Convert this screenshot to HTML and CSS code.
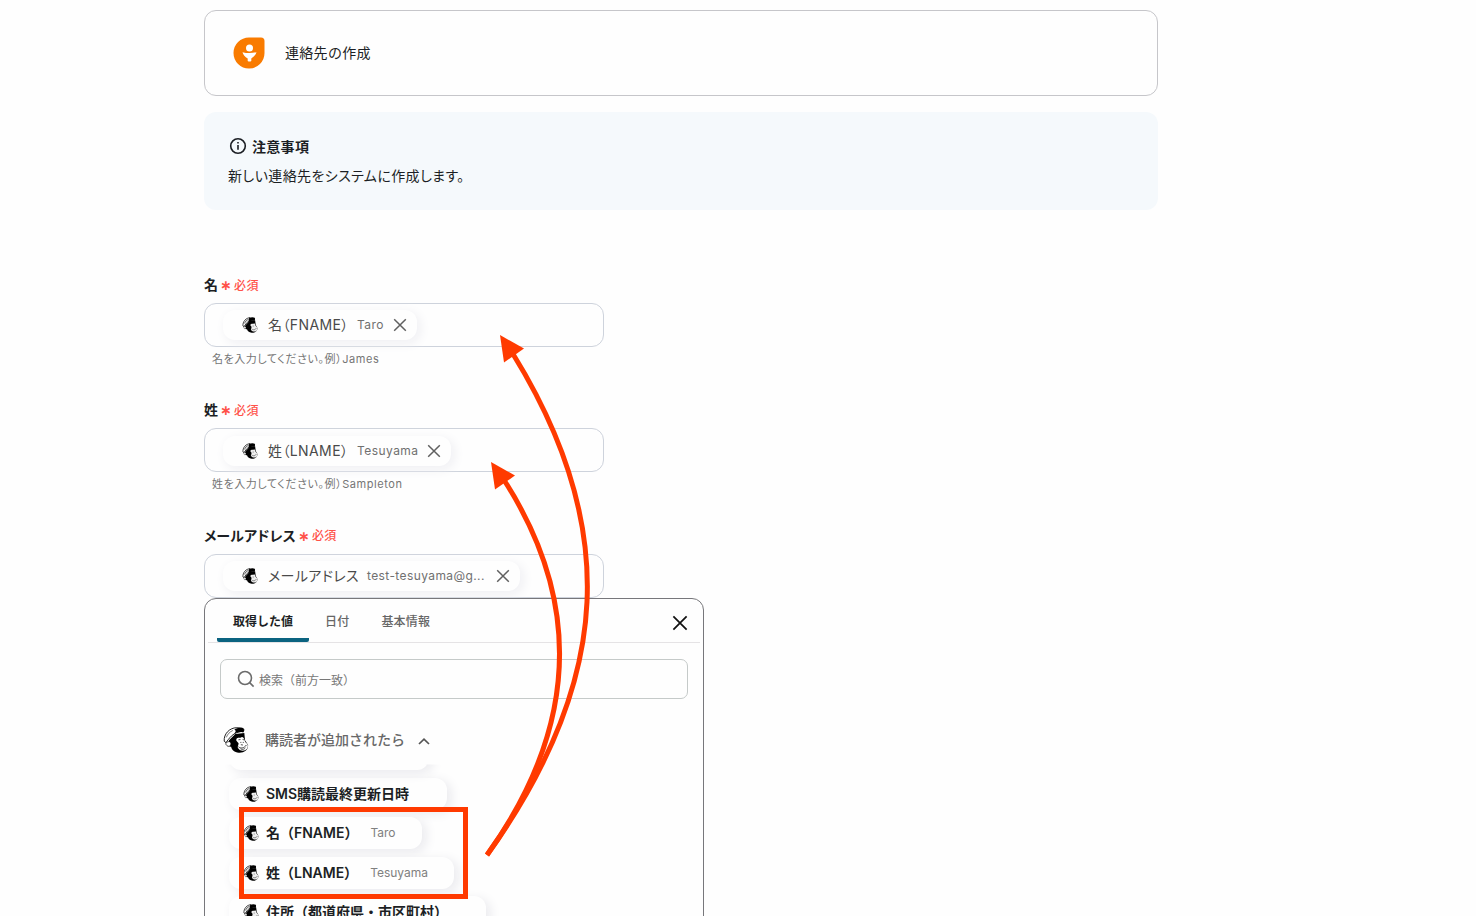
FILE: index.html
```html
<!DOCTYPE html>
<html lang="ja">
<head>
    <meta charset="UTF-8">
    <meta name="viewport" content="width=device-width, initial-scale=1.0">
    <title>連絡先の作成</title>
    <link rel="stylesheet" href="styles.css">
</head>
<body>
    <svg width="0" height="0" class="defs">
        <symbol id="monkey" viewBox="0 0 72 75">
            <path d="M16 38 L34 20 L60 17 L62 38 L71 52 C71 68 58 75 44 74 C31 73 24 67 22 57 C16 57 12 50 15 44 Z" fill="#000"/>
            <path d="M2 41 C0 20 18 2 38 2 L56 4 C60 7 59 10 57 13 C40 12 24 22 14 36 L7 45 Z" fill="#fff" stroke="#000" stroke-width="2.5"/>
            <path d="M31 8 C40 1 54 1 58 5 C60 9 59 13 57 16 C47 13 39 15 30 20 C37 13 36 10 31 8 Z" fill="#000"/>
            <path d="M8 30 C12 20 18 14 27 10" fill="none" stroke="#000" stroke-width="1.5"/>
            <path d="M12 43 C19 40 24 46 20 53 C17 58 10 56 7 50 C6 47 8 44 12 43 Z" fill="#fff" stroke="#000" stroke-width="2"/>
            <path d="M37 35 C41 28 50 33 55 29 C60 32 60 40 64 45 C71 49 72 57 68 63 C61 71 48 70 43 62 C38 57 45 51 43 46 C41 42 35 40 37 35 Z" fill="#fff"/>
            <path d="M43 37 L49 36 M55 36 L59 37 M50 43 V46 M57 43 V46 M43 57 C49 63 60 61 66 52 M50 51 L56 52 M49 63 C55 66 60 64 63 60" fill="none" stroke="#000" stroke-width="2"/>
        </symbol>
        <symbol id="monkey-small" viewBox="0 0 72 75">
            <path d="M14 40 L34 17 L60 15 L63 38 L71 52 C71 68 58 75 44 74 C31 73 24 67 22 58 C13 57 10 50 14 40 Z" fill="#000"/>
            <path d="M3 42 C1 21 18 4 36 3 C41 8 39 14 31 19 C23 24 17 30 13 38 L7 45 Z" fill="#fff" stroke="#000" stroke-width="3.5"/>
            <path d="M31 6 C40 0 54 1 58 4 C61 8 60 14 57 18 C46 16 38 18 29 23 Z" fill="#000"/>
            <path d="M10 30 C14 21 20 15 29 11" fill="none" stroke="#000" stroke-width="3"/>
            <path d="M8 45 C14 42 20 47 16 54 C10 58 5 51 8 45 Z" fill="#fff" stroke="#000" stroke-width="2"/>
            <path d="M38 36 C42 28 51 34 56 29 C62 33 60 40 65 45 C72 50 72 58 68 63 C61 71 47 70 42 62 C37 57 45 51 43 46 C41 42 36 40 38 36 Z" fill="#eee"/>
            <path d="M51 40 V45 M43 56 C50 63 61 61 66 52" fill="none" stroke="#555" stroke-width="3"/>
        </symbol>
        <symbol id="cross" viewBox="0 0 14 14">
            <path d="M1.2 1.2 L12.8 12.8 M12.8 1.2 L1.2 12.8" fill="none" stroke="currentColor" stroke-width="1.5"/>
        </symbol>
    </svg>

    <main class="page">
        <section class="card">
            <svg class="card-icon" width="32" height="32" viewBox="0 0 32 32">
                <path d="M16 .5 H28 Q31.5 .5 31.5 4 V16 A15.5 15.5 0 1 1 16 .5 Z" fill="#f97b00"/>
                <circle cx="16.5" cy="11" r="3.5" fill="#fff"/>
                <path d="M9.5 15.2 Q16.5 17 23.5 15.2 Q22.5 19 18.3 21.5 V24 Q16.5 25.2 14.7 24 V21.5 Q10.5 19 9.5 15.2 Z" fill="#fff"/>
            </svg>
            <span>連絡先の作成</span>
        </section>

        <section class="notice">
            <h2 class="notice-title">
                <svg width="18" height="18" viewBox="0 0 18 18" fill="none" stroke="#1c1f24">
                    <circle cx="9" cy="9" r="7.3" stroke-width="1.6"/>
                    <path d="M9 8 V12.8 M9 5 V6.6" stroke-width="1.6"/>
                </svg>
                注意事項
            </h2>
            <p class="notice-text">新しい連絡先をシステムに作成します。</p>
        </section>

        <div class="fields">
            <div class="field">
                <label class="label">名<span class="required"><b>∗</b>必須</span></label>
                <div class="input">
                    <span class="token">
                        <svg class="brand"><use href="#monkey-small"/></svg>
                        <span class="token-name">名（FNAME）</span>
                        <span class="token-value first">Taro</span>
                        <svg class="remove"><use href="#cross"/></svg>
                    </span>
                </div>
                <p class="hint">名を入力してください。例）James</p>
            </div>
            <div class="field">
                <label class="label">姓<span class="required"><b>∗</b>必須</span></label>
                <div class="input">
                    <span class="token">
                        <svg class="brand"><use href="#monkey-small"/></svg>
                        <span class="token-name">姓（LNAME）</span>
                        <span class="token-value last">Tesuyama</span>
                        <svg class="remove"><use href="#cross"/></svg>
                    </span>
                </div>
                <p class="hint">姓を入力してください。例）Sampleton</p>
            </div>
            <div class="field">
                <label class="label">メールアドレス<span class="required"><b>∗</b>必須</span></label>
                <div class="input">
                    <span class="token">
                        <svg class="brand"><use href="#monkey-small"/></svg>
                        <span class="token-name mail">メールアドレス</span>
                        <span class="token-value address">test-tesuyama@g...</span>
                        <svg class="remove"><use href="#cross"/></svg>
                    </span>
                </div>

                <div class="menu">
                    <div class="tabs">
                        <span class="tab active">取得した値</span>
                        <span class="tab">日付</span>
                        <span class="tab">基本情報</span>
                        <svg class="menu-close"><use href="#cross"/></svg>
                    </div>
                    <div class="search">
                        <svg width="18" height="18" viewBox="0 0 18 18" fill="none" stroke="#6b6b6b" stroke-width="1.6">
                            <circle cx="8" cy="8" r="6.5"/>
                            <path d="M12.6 12.6 L16.6 16.6"/>
                        </svg>
                        <span>検索（前方一致）</span>
                    </div>
                    <div class="group">
                        <svg class="group-icon"><use href="#monkey"/></svg>
                        <span>購読者が追加されたら</span>
                        <svg class="chevron" width="12" height="8" viewBox="0 0 12 8" fill="none" stroke="#555" stroke-width="1.7">
                            <path d="M1 7 L6 2.2 L11 7"/>
                        </svg>
                    </div>
                    <div class="chips">
                        <div class="chip previous"></div>
                        <div class="chip sms"><svg class="brand"><use href="#monkey-small"/></svg><span>SMS購読最終更新日時</span></div>
                        <div class="chip"><svg class="brand"><use href="#monkey-small"/></svg><span>名（FNAME）</span><small>Taro</small></div>
                        <div class="chip"><svg class="brand"><use href="#monkey-small"/></svg><span>姓（LNAME）</span><small>Tesuyama</small></div>
                        <div class="chip place"><svg class="brand"><use href="#monkey-small"/></svg><span>住所（都道府県・市区町村）</span></div>
                    </div>
                </div>
            </div>
        </div>
    </main>

    <svg class="marks" width="1476" height="916" viewBox="0 0 1476 916">
        <rect x="241.5" y="809.5" width="224" height="87" fill="none" stroke="#ff3a00" stroke-width="5"/>
        <g fill="none" stroke="#ff3a00" stroke-width="5">
            <path d="M487 855 C614 678 618 524 513 354"/>
            <path d="M487 855 Q623 665 504 480"/>
        </g>
        <g fill="#ff3a00">
            <path d="M500 335 L524 348.5 L504 362.5 Z"/>
            <path d="M491 462 L515 475.5 L495 489.5 Z"/>
        </g>
    </svg>
</body>
</html>
```
FILE: styles.css
```css
* {
    box-sizing: border-box;
}
body {
    margin: 0;
    height: 916px;
    overflow: hidden;
    background: #fefefe;
    color: #1c1f24;
    font-family: Inter, "Noto Sans CJK JP", sans-serif;
    font-size: 14px;
}
h2, p {
    margin: 0;
}
svg {
    flex-shrink: 0;
}
.defs {
    position: absolute;
}
.page {
    width: 954px;
    margin-left: 204px;
    padding-top: 10px;
}
.card {
    display: flex;
    align-items: center;
    gap: 20px;
    height: 86px;
    padding-left: 28px;
    border: 1px solid #c6c6ca;
    border-radius: 12px;
}
.card span {
    padding-bottom: 2px;
    letter-spacing: 0.3px;
}
.notice {
    height: 98px;
    margin-top: 16px;
    padding: 23px 24px;
    border-radius: 12px;
    background: #f5f9fc;
}
.notice-title {
    display: flex;
    align-items: center;
    gap: 5px;
    height: 21px;
    padding-left: 1px;
    font-size: 14px;
    font-weight: 600;
    letter-spacing: 0.3px;
}
.notice-text {
    margin-top: 9px;
    line-height: 21px;
    font-feature-settings: "palt";
    letter-spacing: 0.4px;
}
.fields {
    margin-top: 61px;
}
.field {
    position: relative;
    height: 125.4px;
}
.label {
    display: flex;
    align-items: center;
    height: 26px;
    margin-bottom: 6px;
    font-weight: 600;
    font-feature-settings: "palt";
    letter-spacing: 0.1px;
}
.required {
    display: flex;
    align-items: center;
    gap: 4px;
    margin-left: 2px;
    color: #ff5249;
    font-size: 12px;
    font-weight: 500;
    letter-spacing: 0.3px;
}
.required b {
    width: 10px;
    padding-top: 2px;
    font-family: "DejaVu Sans", sans-serif;
    font-size: 14px;
    font-weight: 700;
    line-height: 14px;
    letter-spacing: 0;
}
.input {
    width: 400px;
    height: 44px;
    padding: 6.3px 18px 0;
    border: 1px solid #ced3dc;
    border-radius: 12px;
}
.token {
    display: inline-flex;
    align-items: center;
    height: 30px;
    padding: 0 10px 0 19px;
    border-radius: 12px;
    background: #fefefe;
    box-shadow: 3px 3px 12px #eeeef2;
    font-feature-settings: "palt";
    white-space: nowrap;
}
.brand {
    width: 16px;
    height: 16px;
}
.token-name {
    width: 80px;
    margin-left: 10px;
    padding-bottom: 2px;
    color: #4a4a4a;
    letter-spacing: 0.4px;
}
.token-name.mail {
    width: 90px;
}
.token-value {
    margin-left: 9px;
    padding-bottom: 1px;
    color: #707070;
    font-size: 12px;
    letter-spacing: 0.45px;
}
.first {
    width: 27px;
}
.last {
    width: 61px;
}
.address {
    width: 120px;
    letter-spacing: 0.4px;
}
.remove {
    width: 14px;
    height: 14px;
    margin-left: 9px;
    color: #606060;
}
.hint {
    padding-left: 8px;
    color: #757575;
    font-size: 11px;
    line-height: 24px;
    font-feature-settings: "palt";
    letter-spacing: 0.57px;
}
.menu {
    position: absolute;
    top: 76px;
    left: 0;
    z-index: 1;
    width: 500px;
    height: 360px;
    border: 1px solid #77777b;
    border-radius: 12px;
    background: #fefefe;
}
.tabs {
    display: flex;
    height: 44px;
    margin: 0 3px;
    padding-left: 9px;
    border-bottom: 1px solid #e5e3e5;
}
.tab {
    height: 43px;
    padding: 0 16px;
    color: #666;
    font-size: 12px;
    font-weight: 500;
    line-height: 45px;
    letter-spacing: 0.2px;
}
.tab.active {
    border-bottom: 4px solid #0b6380;
    border-radius: 2px;
    color: #1c1f24;
    font-weight: 600;
    letter-spacing: 0;
}
.menu-close {
    width: 16px;
    height: 16px;
    margin: 16px 12px 0 auto;
    color: #111;
}
.search {
    display: flex;
    align-items: center;
    gap: 4px;
    width: 468px;
    height: 40px;
    margin: 16px 0 0 15px;
    padding-left: 16px;
    border: 1px solid #c5cac9;
    border-radius: 7px;
    color: #777;
    font-size: 12px;
}
.search span {
    padding-top: 1px;
}
.group {
    display: flex;
    align-items: center;
    height: 26px;
    margin: 28px 0 0 18px;
    color: #686868;
    font-weight: 500;
}
.group-icon {
    width: 26px;
    height: 26px;
    margin-right: 16px;
}
.group span {
    width: 153px;
    padding-bottom: 2px;
}
.chevron {
    margin-top: 2px;
}
.chips {
    display: flex;
    flex-direction: column;
    align-items: flex-start;
    gap: 7.4px;
    margin: -14.3px 0 0 24px;
}
.chip {
    display: flex;
    align-items: center;
    height: 32px;
    padding: 0 26px 0 14px;
    border-radius: 12px;
    background: #fefefe;
    box-shadow: 4px 3px 12px #e9e9ed;
    font-weight: 600;
    white-space: nowrap;
}
.chip span {
    margin-left: 7px;
    padding-bottom: 2px;
}
.chip small {
    margin-left: 12px;
    padding-bottom: 1px;
    color: #808080;
    font-size: 12px;
    font-weight: 400;
}
.previous {
    width: 200px;
    clip-path: inset(26px -20px -20px -20px);
}
.sms {
    padding-right: 38px;
}
.place {
    padding-right: 38px;
}
.marks {
    position: absolute;
    top: 0;
    left: 0;
    z-index: 2;
    pointer-events: none;
}
```
